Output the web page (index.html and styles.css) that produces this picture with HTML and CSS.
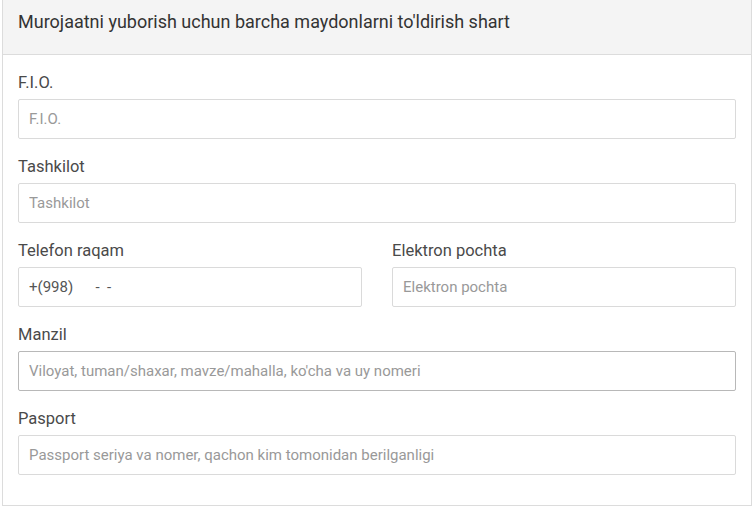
FILE: index.html
```html
<!DOCTYPE html>
<html lang="uz">
<head>
<meta charset="utf-8">
<title>Murojaat</title>
<link rel="stylesheet" href="styles.css">
</head>
<body>
<div class="card">
  <div class="card-header">Murojaatni yuborish uchun barcha maydonlarni to'ldirish shart</div>
  <div class="card-body">
    <div class="group">
      <label class="label">F.I.O.</label>
      <input class="input" type="text" placeholder="F.I.O.">
    </div>
    <div class="group">
      <label class="label">Tashkilot</label>
      <input class="input" type="text" placeholder="Tashkilot">
    </div>
    <div class="row">
      <div class="group">
        <label class="label">Telefon raqam</label>
        <input class="input" type="text" value="+(998)      -  -">
      </div>
      <div class="group">
        <label class="label">Elektron pochta</label>
        <input class="input" type="text" placeholder="Elektron pochta">
      </div>
    </div>
    <div class="group">
      <label class="label">Manzil</label>
      <input class="input input-focus" type="text" placeholder="Viloyat, tuman/shaxar, mavze/mahalla, ko'cha va uy nomeri">
    </div>
    <div class="group">
      <label class="label">Pasport</label>
      <input class="input" type="text" placeholder="Passport seriya va nomer, qachon kim tomonidan berilganligi">
    </div>
  </div>
</div>
</body>
</html>
```

FILE: styles.css
```css
* { box-sizing: border-box; }
html, body { margin: 0; padding: 0; background: #fff; }
body {
  font-family: Roboto, "Noto Sans", Arial, sans-serif;
  color: #444;
}
.card {
  width: 750px;
  margin: -1px 0 0 2px;
  border: 1px solid #dcdcdc;
  background: #fff;
}
.card-header {
  height: 55px;
  background: #f4f4f4;
  border-bottom: 1px solid #dcdcdc;
  padding: 11px 15px 0;
  font-size: 18px;
  line-height: 22px;
  color: #333;
}
.card-body {
  padding: 16px 15px 14px;
}
.group {
  margin-bottom: 16px;
}
.label {
  display: block;
  font-size: 16.5px;
  line-height: 24px;
  margin-bottom: 4px;
  color: #4a4a4a;
}
.input {
  display: block;
  width: 100%;
  height: 40px;
  border: 1px solid #dadada;
  border-radius: 2px;
  padding: 0 10px;
  font-family: Roboto, "Noto Sans", Arial, sans-serif;
  font-size: 15px;
  color: #555;
  background: #fff;
  outline: none;
}
.input::placeholder { color: #999; }
.input-focus { border-color: #b8b8b8; }
.row {
  display: grid;
  grid-template-columns: 1fr 1fr;
  column-gap: 30px;
}
```
